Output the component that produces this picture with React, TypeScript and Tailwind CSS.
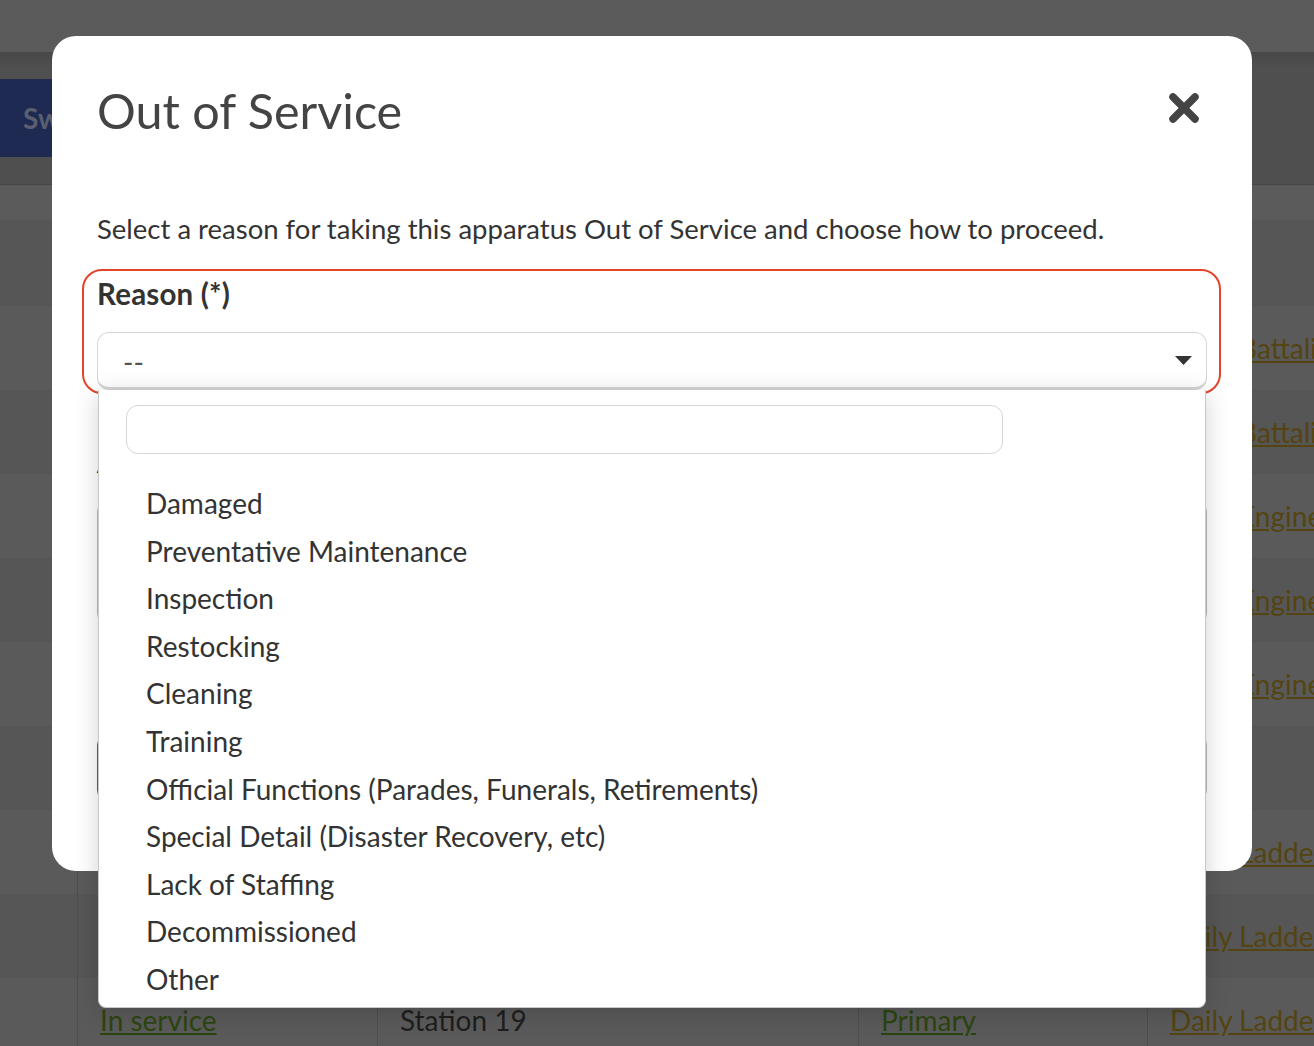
import React from 'react';

// Background table rows (mostly hidden behind the modal)
const ROWS = [
  { status: 'In service', station: 'Station 3', type: 'Primary', check: 'Daily Battalion Chief Check' },
  { status: 'In service', station: 'Station 5', type: 'Primary', check: 'Daily Battalion Chief Check' },
  { status: 'In service', station: 'Station 7', type: 'Primary', check: 'Daily Engine Check' },
  { status: 'In service', station: 'Station 9', type: 'Primary', check: 'Daily Engine Check' },
  { status: 'In service', station: 'Station 11', type: 'Primary', check: 'Daily Engine Check' },
  { status: 'In service', station: 'Station 12', type: 'Reserve', check: '' },
  { status: 'In service', station: 'Station 14', type: 'Primary', check: 'Daily Ladder Check' },
  { status: 'In service', station: 'Station 17', type: 'Primary', check: 'Daily Ladder Check' },
  { status: 'In service', station: 'Station 19', type: 'Primary', check: 'Daily Ladder Check' },
];

const REASONS = [
  'Damaged',
  'Preventative Maintenance',
  'Inspection',
  'Restocking',
  'Cleaning',
  'Training',
  'Official Functions (Parades, Funerals, Retirements)',
  'Special Detail (Disaster Recovery, etc)',
  'Lack of Staffing',
  'Decommissioned',
  'Other',
];

const CloseIcon = () => (
  <svg width="32" height="32" viewBox="0 0 32 32" fill="none">
    <path d="M5 5 L27 27 M27 5 L5 27" stroke="#444444" strokeWidth="7.5" strokeLinecap="round" />
  </svg>
);

const Caret = () => (
  <svg width="17" height="9" viewBox="0 0 17 9">
    <polygon points="0,0 17,0 8.5,9" fill="#333333" />
  </svg>
);

const BackgroundPage = () => (
  <div className="flex flex-col">
    {/* Top nav */}
    <div className="h-[52px] bg-[#5b5b5b]" />

    {/* Toolbar */}
    <div className="h-[133px] border-b border-[#454545] bg-gradient-to-b from-[#484848] to-[#4f4f4f] to-[12%]">
      <div className="mt-[27px] h-[78px] w-[220px] bg-[#1f2a52] rounded-r-md flex items-center pl-[23px]">
        <span className="text-[28px] font-bold text-[#5a5f70]">Switch View</span>
      </div>
    </div>

    <div className="h-[35px] bg-[#5b5b5b]" />
    <div className="h-[86px] bg-[#565656]" />

    {/* Table rows */}
    <div className="flex flex-col">
      {ROWS.map((row, i) => (
        <div
          key={i}
          className={`h-[84px] flex items-center text-[28px] ${i % 2 === 0 ? 'bg-[#5a5a5a]' : 'bg-[#565656]'}`}
        >
          <div className="w-[77px] h-full" />
          <div className="w-[300px] h-full flex items-center pl-[22px] border-l border-[#4e4e4e]">
            <span className="underline text-[#2c4510]">{row.status}</span>
          </div>
          <div className="w-[481px] h-full flex items-center pl-[22px] border-l border-[#4e4e4e]">
            <span className="text-[#1e1e1e]">{row.station}</span>
          </div>
          <div className="w-[289px] h-full flex items-center pl-[22px] border-l border-[#4e4e4e]">
            <span className="underline text-[#2c4510]">{row.type}</span>
          </div>
          <div className="flex-1 h-full flex items-center pl-[22px] border-l border-[#4e4e4e] whitespace-nowrap overflow-hidden">
            <span className="underline text-[#544412]">{row.check}</span>
          </div>
        </div>
      ))}
    </div>
  </div>
);

export default function App() {
  return (
    <div className="relative h-[1046px] w-full overflow-hidden bg-[#5a5a5a] font-['Lato',sans-serif]">
      <BackgroundPage />

      {/* Modal */}
      <div className="absolute left-[52px] top-[36px] w-[1200px] h-[835px] bg-white rounded-[24px] pl-[45px] pr-[45px] pt-[45px]">
        {/* Header */}
        <div className="flex items-start justify-between">
          <h2 className="text-[48.5px] leading-[58px] text-[#444444]">Out of Service</h2>
          <button className="mt-[11px] mr-[7px]">
            <CloseIcon />
          </button>
        </div>

        <p className="mt-[73px] text-[27.5px] leading-[34px] text-[#333333] whitespace-nowrap">
          Select a reason for taking this apparatus Out of Service and choose how to proceed.
        </p>

        {/* Reason field (highlighted) */}
        <div className="mt-[23px] -ml-[15px] -mr-[14px] border-2 border-[#e4432c] rounded-[20px] pl-[13px] pr-[12px] pt-[6px] pb-[2px]">
          <div className="text-[29.5px] leading-[34px] font-bold text-[#333333] tracking-[0.2px]">Reason (*)</div>
          <div className="relative mt-[21px]">
            <div className="h-[58px] border-[1.5px] border-b-[3px] border-[#d6d6d6] rounded-[12px] flex items-center justify-between pl-[25px] pr-[14px]">
              <span className="text-[28px] text-[#555555] mt-[3px]">--</span>
              <Caret />
            </div>

            {/* Open dropdown */}
            <div className="absolute z-10 top-full left-[1px] right-[1px] h-[618px] bg-white border border-t-0 border-[#c8c8c8] rounded-b-[8px] shadow-[0_4px_24px_rgba(0,0,0,0.18)]">
              <div className="pt-[15px] pl-[27px]">
                <div className="w-[877px] h-[49px] border-[1.5px] border-[#d6d6d6] rounded-[12px]" />
              </div>
              <ul className="mt-[26px] pl-[47px]">
                {REASONS.map((r) => (
                  <li key={r} className="text-[28px] leading-[47.6px] text-[#333333] whitespace-nowrap">
                    {r}
                  </li>
                ))}
              </ul>
            </div>
          </div>
        </div>

        {/* Fields hidden beneath the dropdown */}
        <div className="mt-[51px] text-[28px] leading-[34px] font-bold text-[#222222]">Action (*)</div>
        <div className="mt-[21px] h-[125px] border-[1.5px] border-[#bdbdbd] rounded-[12px]" />
        <div className="mt-[110px] flex gap-[20px]">
          <div className="flex-1 h-[65px] bg-[#3f5bd0] rounded-[10px]" />
          <div className="flex-1 h-[65px] border-[1.5px] border-[#bdbdbd] rounded-[10px]" />
        </div>
      </div>
    </div>
  );
}
